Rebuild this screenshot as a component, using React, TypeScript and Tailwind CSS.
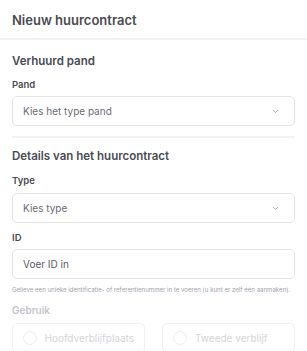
import { ChevronDown } from 'lucide-react'

function Select({ placeholder }: { placeholder: string }) {
  return (
    <div className="flex h-[30px] items-center justify-between rounded-[5px] border border-[#e4e4e7] bg-white pl-[10px] pr-[14px]">
      <span className="text-[10px] text-[#6b6b75]">{placeholder}</span>
      <ChevronDown className="h-[9px] w-[9px] text-[#8a8a94]" strokeWidth={2} />
    </div>
  )
}

function Radio({ label }: { label: string }) {
  return (
    <div className="flex h-[30px] items-center gap-[8px] rounded-[5px] border border-[#f0f0f2] px-[10px]">
      <div className="h-[14px] w-[14px] rounded-full border border-[#ececef]" />
      <span className="text-[10px] text-[#d4d4d8]">{label}</span>
    </div>
  )
}

export default function App() {
  return (
    <div
      className="h-[351px] w-[307px] overflow-hidden bg-white"
      style={{ fontFamily: 'Inter, "Noto Sans", sans-serif' }}
    >
      {/* Header */}
      <div className="border-b-2 border-[#f2f2f4] px-[12px] pb-[10px] pt-[12px]">
        <h1 className="text-[13px] font-semibold leading-[16px] text-[#4a4a54]">Nieuw huurcontract</h1>
      </div>

      <div className="px-[12px]">
        {/* Verhuurd pand */}
        <h2 className="mt-[14px] text-[11.5px] font-semibold leading-[14px] text-[#4a4a54]">Verhuurd pand</h2>
        <label className="mt-[11px] block text-[9.5px] font-semibold leading-[12px] text-[#4a4a54]">Pand</label>
        <div className="mt-[5px]">
          <Select placeholder="Kies het type pand" />
        </div>

        <div className="mt-[10px] h-[2px] bg-[#f2f2f4]" />

        {/* Details */}
        <h2 className="mt-[11px] text-[11.5px] font-semibold leading-[14px] text-[#4a4a54]">
          Details van het huurcontract
        </h2>
        <label className="mt-[12px] block text-[9.5px] font-semibold leading-[12px] text-[#4a4a54]">Type</label>
        <div className="mt-[6px]">
          <Select placeholder="Kies type" />
        </div>

        <label className="mt-[9px] block text-[9.5px] font-semibold leading-[12px] text-[#4a4a54]">ID</label>
        <div className="mt-[5px] flex h-[30px] items-center rounded-[5px] border border-[#e4e4e7] pl-[10px]">
          <span className="text-[10px] text-[#5a5a64]">Voer ID in</span>
        </div>
        <p className="mt-[7px] whitespace-nowrap text-[6.1px] leading-[8px] text-[#a1a1aa]">
          Gelieve een unieke identificatie- of referentienummer in te voeren (u kunt er zelf één aanmaken).
        </p>

        <label className="mt-[10px] block text-[10px] font-semibold leading-[12px] text-[#c4c4ca]">Gebruik</label>
        <div className="mt-[7px] grid grid-cols-2 gap-[17px]">
          <Radio label="Hoofdverblijfplaats" />
          <Radio label="Tweede verblijf" />
        </div>
      </div>
    </div>
  )
}
